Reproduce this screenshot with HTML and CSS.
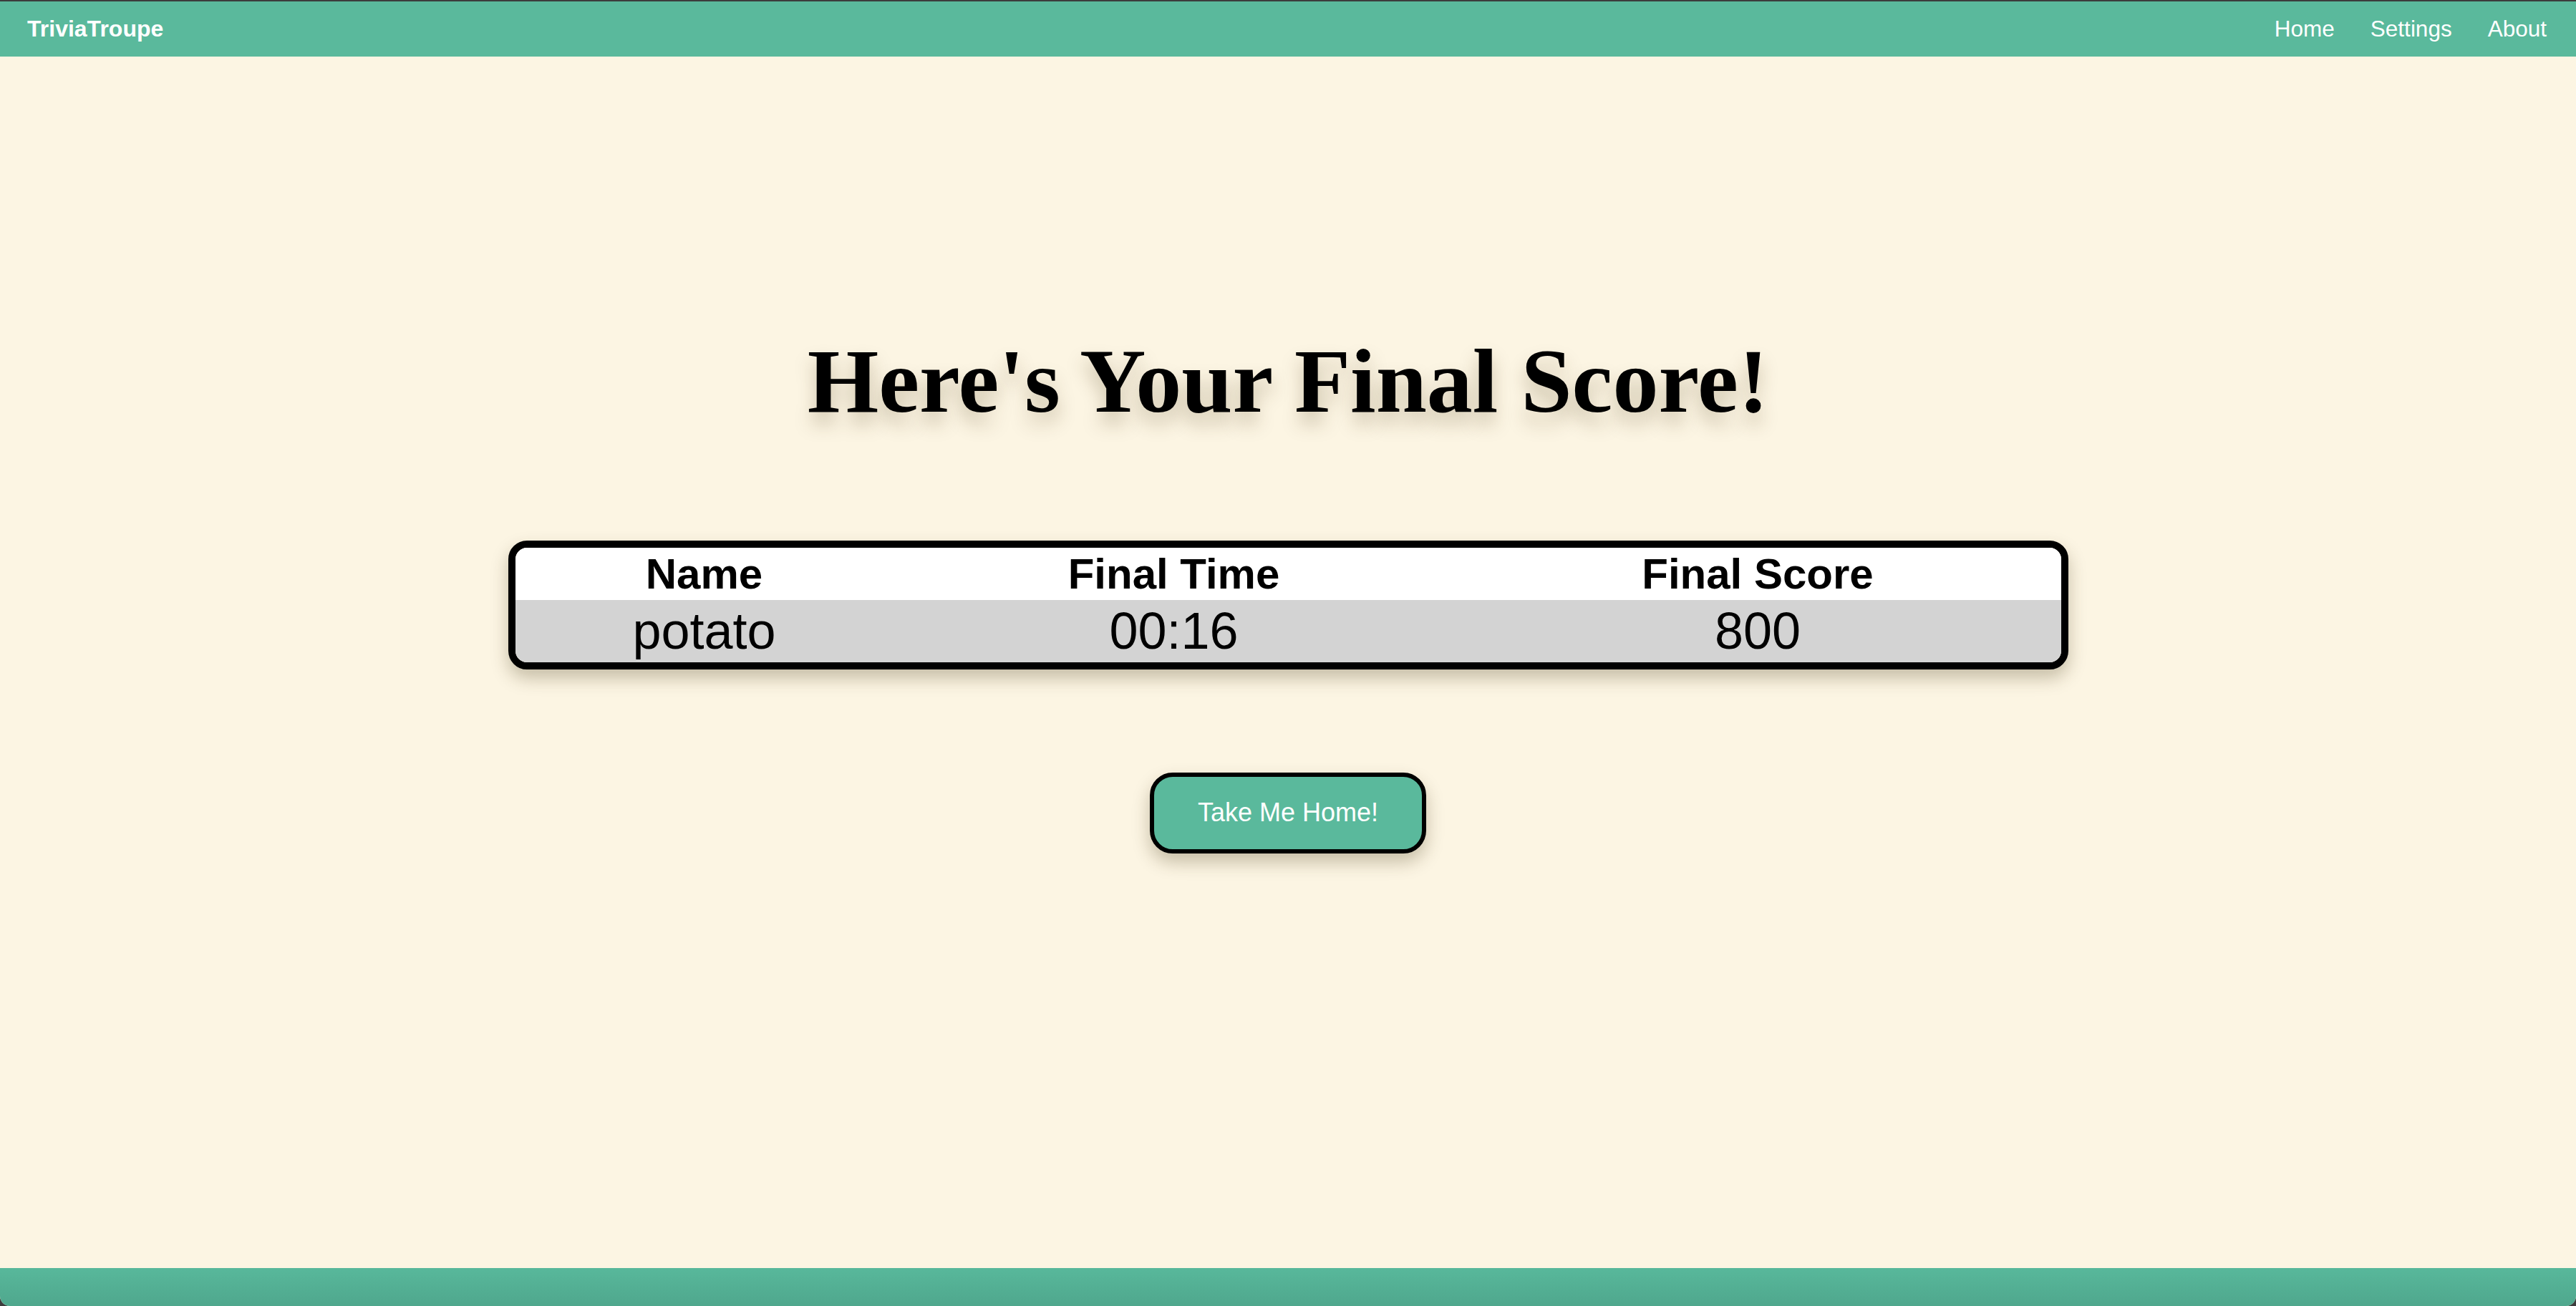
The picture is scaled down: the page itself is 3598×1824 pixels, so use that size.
FILE: index.html
```html
<!DOCTYPE html>
<html lang="en">
<head>
<meta charset="utf-8">
<title>TriviaTroupe - Final Score</title>
<link rel="stylesheet" href="styles.css">
</head>
<body>
<div class="window">
  <nav class="navbar">
    <a class="brand" href="#">TriviaTroupe</a>
    <ul class="nav-links">
      <li><a href="#">Home</a></li>
      <li><a href="#">Settings</a></li>
      <li><a href="#">About</a></li>
    </ul>
  </nav>
  <main class="content">
    <h1 class="title">Here's Your Final Score!</h1>
    <div class="score-card">
      <table class="score-table">
        <colgroup>
          <col class="col-name">
          <col class="col-time">
          <col class="col-score">
        </colgroup>
        <thead>
          <tr><th>Name</th><th>Final Time</th><th>Final Score</th></tr>
        </thead>
        <tbody>
          <tr><td>potato</td><td>00:16</td><td>800</td></tr>
        </tbody>
      </table>
    </div>
    <a class="home-btn" href="#">Take Me Home!</a>
  </main>
  <footer class="footer"></footer>
</div>
</body>
</html>
```

FILE: styles.css
```css
* {
  box-sizing: border-box;
}

html, body {
  margin: 0;
  padding: 0;
  height: 100%;
}

body {
  background: #3c3c3c;
  font-family: "Liberation Sans", Arial, Helvetica, sans-serif;
}

.window {
  margin-top: 2px;
  height: calc(100% - 2px);
  display: flex;
  flex-direction: column;
  background: #fcf5e3;
  border-radius: 0 0 14px 14px;
  overflow: hidden;
}

.navbar {
  flex: 0 0 77px;
  height: 77px;
  background: #5ab99c;
  display: flex;
  align-items: center;
  justify-content: space-between;
  padding: 0 41px 0 38px;
}

.brand {
  color: #ffffff;
  font-weight: bold;
  font-size: 32px;
  text-decoration: none;
}

.nav-links {
  list-style: none;
  margin: 0;
  padding: 0;
  display: flex;
  gap: 50px;
}

.nav-links a {
  color: #ffffff;
  font-size: 31.5px;
  text-decoration: none;
}

.content {
  flex: 1;
  display: flex;
  flex-direction: column;
  align-items: center;
  padding-top: 380px;
}

.title {
  margin: 0;
  font-family: "Liberation Serif", "Times New Roman", Times, serif;
  font-weight: bold;
  font-size: 128px;
  line-height: 146px;
  color: #000;
  text-shadow: 0 16px 26px rgba(70, 50, 10, 0.26);
}

.score-card {
  margin-top: 150px;
  width: 2179px;
  border: 10px solid #000;
  border-radius: 26px;
  overflow: hidden;
  box-shadow: 0 12px 24px rgba(60, 45, 10, 0.28);
}

.score-table {
  width: 100%;
  border-spacing: 0;
  table-layout: fixed;
}

.col-name { width: 528px; }
.col-time { width: 784px; }
.col-score { width: 847px; }

.score-table th {
  background: #ffffff;
  font-size: 60px;
  font-weight: bold;
  height: 73px;
  line-height: 73px;
  padding: 0;
  text-align: center;
}

.score-table td {
  background: #d3d3d3;
  font-size: 72px;
  height: 87px;
  line-height: 87px;
  padding: 0;
  text-align: center;
}

.home-btn {
  margin-top: 144px;
  display: inline-block;
  background: #5ab99c;
  color: #ffffff;
  font-size: 36px;
  line-height: 40px;
  padding: 30px 61px 31px;
  border: 6px solid #000;
  border-radius: 32px;
  text-decoration: none;
  box-shadow: 0 12px 24px rgba(60, 45, 10, 0.28);
}

.footer {
  flex: 0 0 53px;
  height: 53px;
  background: linear-gradient(to bottom, #58b89b, #4fa78d);
}
```
